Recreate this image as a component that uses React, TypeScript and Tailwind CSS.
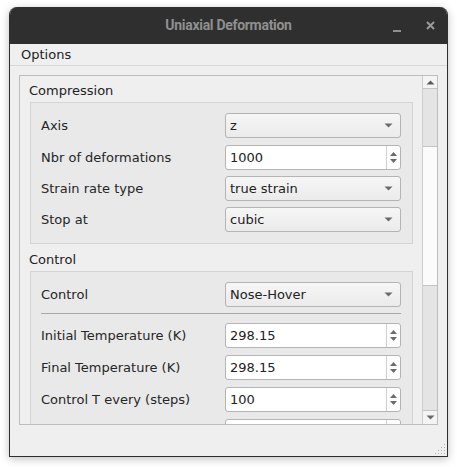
import React from "react";

const font = { fontFamily: '"DejaVu Sans", "Noto Sans", sans-serif' };
const titleFont = { fontFamily: 'Roboto, "Noto Sans", sans-serif' };

const ArrowDown = () => (
  <svg width="9" height="5" viewBox="0 0 9 5" className="shrink-0">
    <path d="M0.5 0.5 L8.5 0.5 L4.5 4.5 Z" fill="#6b6b6b" />
  </svg>
);

const Combo = ({ value }: { value: string }) => (
  <div className="flex h-[25px] w-[176px] items-center justify-between rounded-[3px] border border-[#b4b4b4] bg-gradient-to-b from-[#f6f6f6] to-[#ebebeb] pl-[4px] pr-[7px] text-[13px] text-[#222]">
    <span>{value}</span>
    <ArrowDown />
  </div>
);

const Spin = ({ value }: { value: string }) => (
  <div className="flex h-[25px] w-[176px] rounded-[3px] border border-[#b4b4b4] bg-white text-[13px] text-[#222]">
    <div className="flex flex-1 items-center pl-[4px]">{value}</div>
    <div className="flex w-[14px] flex-col items-center justify-center gap-[3px] border-l border-[#cfcfcf]">
      <svg width="7" height="4" viewBox="0 0 7 4">
        <path d="M0 4 L7 4 L3.5 0 Z" fill="#6b6b6b" />
      </svg>
      <svg width="7" height="4" viewBox="0 0 7 4">
        <path d="M0 0 L7 0 L3.5 4 Z" fill="#6b6b6b" />
      </svg>
    </div>
  </div>
);

const Row = ({ label, children, className = "" }: { label: string; children: React.ReactNode; className?: string }) => (
  <div className={`flex items-center justify-between ${className}`}>
    <span className="text-[13px] text-[#262626]">{label}</span>
    {children}
  </div>
);

export default function App() {
  return (
    <div className="h-[467px] w-[457px] bg-white pl-[9px] pt-[7px]" style={font}>
      <div className="flex h-[450px] w-[439px] flex-col overflow-hidden rounded-t-[8px] border-x border-b border-[#2f2f2f] bg-[#efefef] shadow-[0_2px_8px_rgba(0,0,0,0.25)]">
        {/* title bar */}
        <div className="relative flex h-[37px] items-center justify-center bg-[#2f2f2f]">
          <span className="text-[14px] font-bold tracking-[-0.3px] text-[#8f8f8f]" style={titleFont}>
            Uniaxial Deformation
          </span>
          <span className="absolute left-[383px] top-[23px] h-[2px] w-[8px] bg-[#8f8f8f]" />
          <svg className="absolute left-[416px] top-[14px]" width="9" height="9" viewBox="0 0 9 9">
            <path d="M1 1 L8 8 M8 1 L1 8" stroke="#9a9a9a" strokeWidth="2" />
          </svg>
        </div>
        {/* menu */}
        <div className="flex h-[22px] items-center border-b border-[#d6d6d6] pl-[11px] text-[13px] text-[#222]">
          Options
        </div>
        <div className="relative flex-1 px-[9px] pb-[31px] pt-[9px]">
          <div className="flex h-[350px] border border-[#bdbdbd]">
            <div className="flex-1 overflow-hidden pl-[10px] pr-[9px] pt-[6px]">
              <div className="-ml-[1px] h-[17px] text-[13px] leading-[17px] text-[#222]">Compression</div>
              <div className="mt-[3px] flex h-[142px] flex-col gap-[6px] border border-[#d4d4d4] bg-[#e9e9e9] pb-[10px] pl-[10px] pr-[11px] pt-[10px]">
                <Row label="Axis">
                  <Combo value="z" />
                </Row>
                <Row label="Nbr of deformations" className="mt-[1px]">
                  <Spin value="1000" />
                </Row>
                <Row label="Strain rate type">
                  <Combo value="true strain" />
                </Row>
                <Row label="Stop at">
                  <Combo value="cubic" />
                </Row>
              </div>
              <div className="-ml-[1px] mt-[7px] h-[17px] text-[13px] leading-[17px] text-[#222]">Control</div>
              <div className="mt-[3px] flex h-[200px] flex-col border border-[#d4d4d4] bg-[#e9e9e9] pl-[10px] pr-[11px] pt-[10px]">
                <Row label="Control">
                  <Combo value="Nose-Hover" />
                </Row>
                <div className="mb-[9px] mt-[6px] h-px bg-[#a8a8a8]" />
                <div className="flex flex-col gap-[7px]">
                  <Row label="Initial Temperature (K)">
                    <Spin value="298.15" />
                  </Row>
                  <Row label="Final Temperature (K)">
                    <Spin value="298.15" />
                  </Row>
                  <Row label="Control T every (steps)">
                    <Spin value="100" />
                  </Row>
                  <Row label="">
                    <Spin value="" />
                  </Row>
                </div>
              </div>
            </div>
            {/* scrollbar */}
            <div className="flex w-[15px] flex-col border-l border-[#cdcdcd] bg-[#e4e4e4]">
              <div className="flex h-[13px] items-center justify-center border-b border-[#c4c4c4] bg-[#f4f4f4]">
                <svg width="9" height="5" viewBox="0 0 9 5">
                  <path d="M0.5 4.5 L8.5 4.5 L4.5 0.5 Z" fill="#5a5a5a" />
                </svg>
              </div>
              <div className="h-[57px]" />
              <div className="h-[140px] border-y border-[#c4c4c4] bg-[#fbfbfb]" />
              <div className="flex-1" />
              <div className="flex h-[14px] items-center justify-center border-t border-[#c4c4c4] bg-[#f4f4f4]">
                <ArrowDown />
              </div>
            </div>
          </div>
          {/* resize grip */}
          <svg className="absolute bottom-[1px] right-[1px]" width="12" height="12" viewBox="0 0 12 12">
            {[
              [10, 2],
              [7, 5],
              [10, 5],
              [4, 8],
              [7, 8],
              [10, 8],
              [1, 11],
              [4, 11],
              [7, 11],
              [10, 11],
            ].map(([x, y], i) => (
              <rect key={i} x={x} y={y - 1} width="1" height="1" fill="#b0b0b0" />
            ))}
          </svg>
        </div>
      </div>
    </div>
  );
}
